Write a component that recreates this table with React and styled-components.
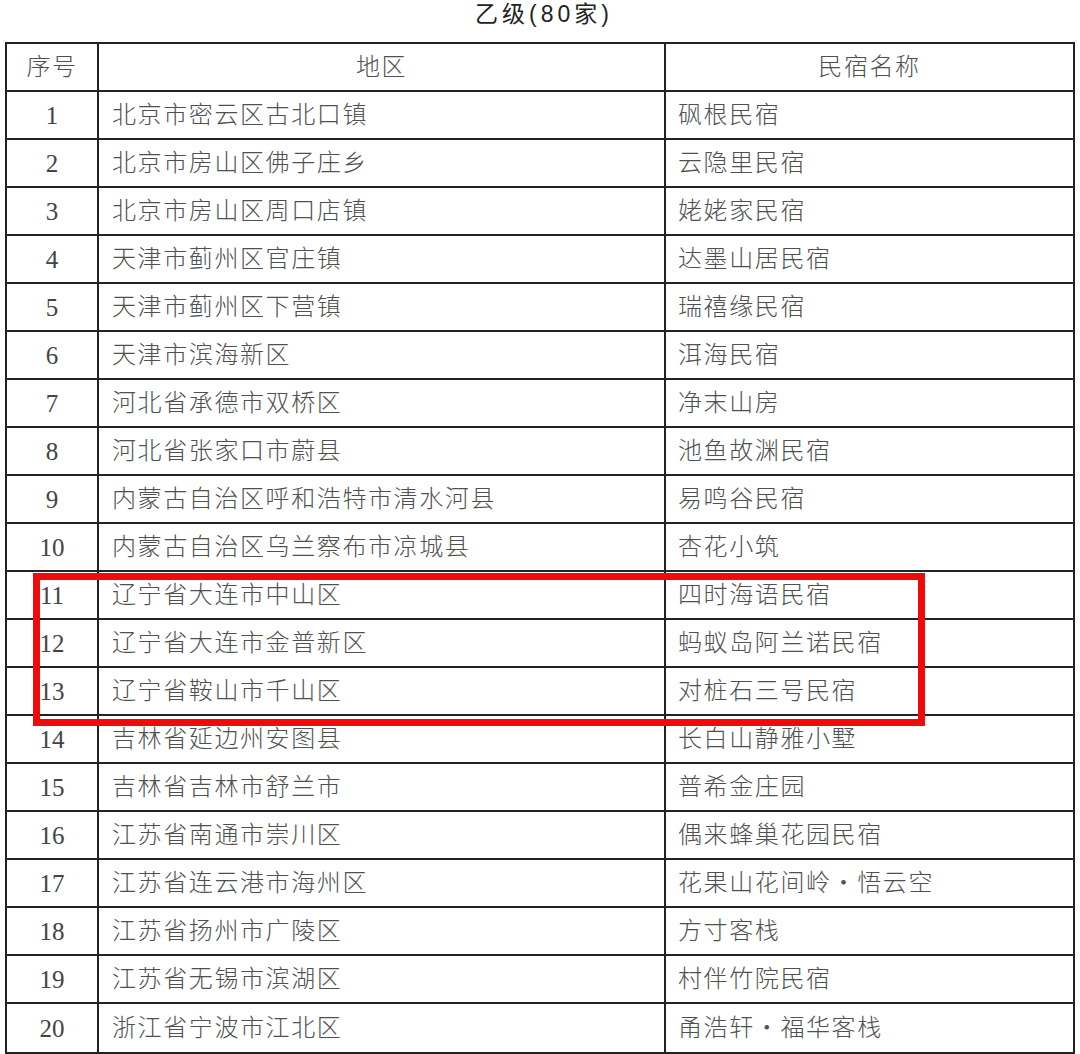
import React from "react";
import styled, { createGlobalStyle } from "styled-components";

const GlobalStyle = createGlobalStyle`
  html, body {
    margin: 0;
    padding: 0;
    background: #fff;
  }
`;

const Page = styled.div`
  width: 1080px;
  height: 1054px;
  overflow: hidden;
  background: #fff;
`;

const Title = styled.div`
  height: 42px;
  display: flex;
  align-items: center;
  justify-content: center;
  padding-left: 8px;
  padding-bottom: 14px;
  box-sizing: border-box;
  font-family: "Liberation Sans", "Noto Sans CJK SC", sans-serif;
  font-size: 23px;
  line-height: 1;
  letter-spacing: 4px;
  color: #222;
`;

// table wrapper is relative so the red highlight can sit on top of it
const Table = styled.div`
  position: relative;
  margin-left: 5px;
  width: 1070px;
  border: 2px solid #222;
  box-sizing: border-box;
`;

const Row = styled.div`
  display: grid;
  grid-template-columns: 90px 567px 1fr;
  height: 48px;
  box-sizing: border-box;
  border-bottom: ${(p) => (p.$last ? "none" : "2px solid #222")};
`;

const Cell = styled.div`
  display: flex;
  align-items: center;
  justify-content: ${(p) => (p.$center ? "center" : "flex-start")};
  padding-left: ${(p) => (p.$center ? "0" : p.$pad || "13px")};
  padding-bottom: 5px;
  box-sizing: border-box;
  border-left: ${(p) => (p.$first ? "none" : "2px solid #222")};
  font-family: "Noto Sans CJK SC", sans-serif;
  font-size: 24px;
  font-weight: 300;
  line-height: 1;
  letter-spacing: 1.6px;
  color: #505050;
  white-space: nowrap;
  overflow: hidden;
`;

const Num = styled.span`
  font-family: "Liberation Serif", serif;
  font-size: 25px;
  font-weight: 400;
  letter-spacing: 0;
  color: #444;
  position: relative;
  top: 3px;
`;

const Highlight = styled.div`
  position: absolute;
  left: 26px;
  top: 529px;
  width: 892px;
  height: 153px;
  border: 7px solid #f00a0a;
  box-sizing: border-box;
  pointer-events: none;
`;

const rows = [
  ["北京市密云区古北口镇", "砜根民宿"],
  ["北京市房山区佛子庄乡", "云隐里民宿"],
  ["北京市房山区周口店镇", "姥姥家民宿"],
  ["天津市蓟州区官庄镇", "达墨山居民宿"],
  ["天津市蓟州区下营镇", "瑞禧缘民宿"],
  ["天津市滨海新区", "洱海民宿"],
  ["河北省承德市双桥区", "净末山房"],
  ["河北省张家口市蔚县", "池鱼故渊民宿"],
  ["内蒙古自治区呼和浩特市清水河县", "易鸣谷民宿"],
  ["内蒙古自治区乌兰察布市凉城县", "杏花小筑"],
  ["辽宁省大连市中山区", "四时海语民宿"],
  ["辽宁省大连市金普新区", "蚂蚁岛阿兰诺民宿"],
  ["辽宁省鞍山市千山区", "对桩石三号民宿"],
  ["吉林省延边州安图县", "长白山静雅小墅"],
  ["吉林省吉林市舒兰市", "普希金庄园"],
  ["江苏省南通市崇川区", "偶来蜂巢花园民宿"],
  ["江苏省连云港市海州区", "花果山花间岭・悟云空"],
  ["江苏省扬州市广陵区", "方寸客栈"],
  ["江苏省无锡市滨湖区", "村伴竹院民宿"],
  ["浙江省宁波市江北区", "甬浩轩・福华客栈"],
];

export default function App() {
  return (
    <Page>
      <GlobalStyle />
      <Title>乙级(80家)</Title>
      <Table>
        <Row>
          <Cell $first $center>序号</Cell>
          <Cell $center>地区</Cell>
          <Cell $center>民宿名称</Cell>
        </Row>
        {rows.map(([area, name], i) => (
          <Row key={i} $last={i === rows.length - 1}>
            <Cell $first $center>
              <Num>{i + 1}</Num>
            </Cell>
            <Cell>{area}</Cell>
            <Cell $pad="12px">{name}</Cell>
          </Row>
        ))}
        <Highlight />
      </Table>
    </Page>
  );
}
